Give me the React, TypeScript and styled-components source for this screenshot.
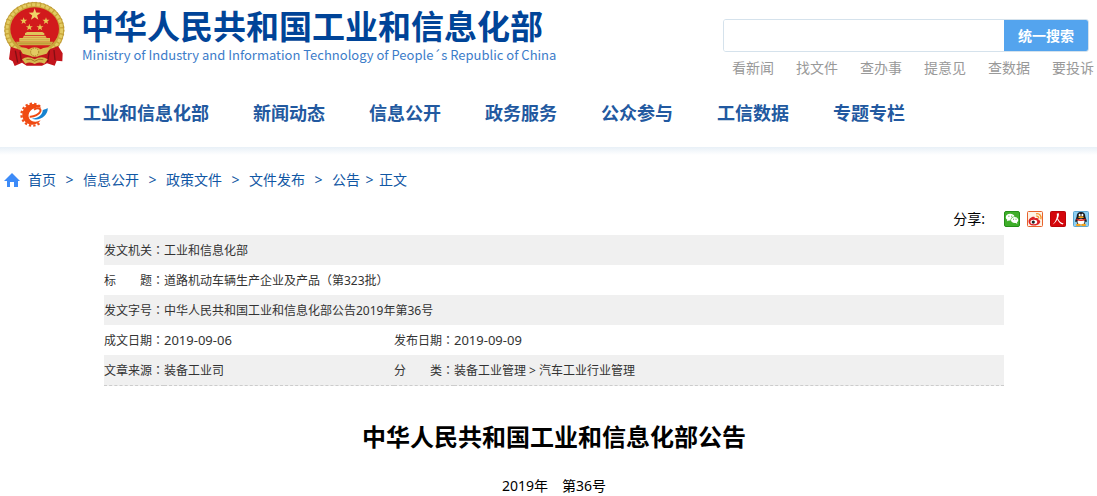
import React from "react";
import styled, { createGlobalStyle } from "styled-components";

const GlobalStyle = createGlobalStyle`
  * { box-sizing: border-box; }
  body {
    margin: 0;
    background: #fff;
    color: #000;
    font: 14px/20px "Noto Sans", "Noto Sans CJK SC", sans-serif;
  }
  a { color: inherit; text-decoration: none; }
  ul, ol { list-style: none; margin: 0; padding: 0; }
`;

const Banner = styled.header`
  display: flex;
  justify-content: space-between;
  height: 80px;
`;

const Brand = styled.a`
  display: flex;
  white-space: nowrap;
`;

const BrandText = styled.span`
  display: flex;
  flex-direction: column;
  padding: 4px 0 0 1px;
`;

const BrandName = styled.span`
  font: 700 33px/42px "Noto Sans CJK SC", sans-serif;
  color: #004498;
`;

const BrandEnglish = styled.span`
  padding-left: 1px;
  font: 400 13px/18px "Noto Sans CJK SC", sans-serif;
  color: #3c7cc9;
`;

const SearchArea = styled.div`
  width: 374px;
  padding-top: 19px;
`;

const SearchForm = styled.form`
  display: flex;
  width: 366px;
  height: 33px;
  border: 1px solid #d5e2ec;
  border-radius: 3px;
  overflow: hidden;
`;

const SearchInput = styled.input`
  flex: 1;
  min-width: 0;
  padding: 0 8px;
  border: 0;
  outline: 0;
  font-size: 14px;
`;

const SearchButton = styled.button`
  width: 84px;
  padding: 0;
  border: 0;
  background: #54a4ee;
  color: #fff;
  font: 700 14px/31px "Noto Sans CJK SC", sans-serif;
`;

const QuickLinks = styled.ul`
  display: flex;
  gap: 22px;
  padding: 6px 0 0 9px;
  color: #999;
  white-space: nowrap;
`;

const Nav = styled.nav`
  display: flex;
  align-items: center;
  height: 67px;
  padding-left: 17px;
`;

const NavList = styled.ul`
  display: flex;
  gap: 44px;
  padding: 0 0 4px 34px;
  font: 700 18px/28px "Noto Sans CJK SC", sans-serif;
  color: #2259a0;
  white-space: nowrap;
`;

const NavShadow = styled.div`
  height: 8px;
  background: linear-gradient(#e8f0f7, #fff);
`;

const Breadcrumb = styled.nav`
  display: flex;
  align-items: center;
  padding: 15px 0 0 4px;
  color: #1157a4;

  svg { margin-right: 8px; }
`;

const Separator = styled.span<{ $tight?: boolean }>`
  width: ${(p) => (p.$tight ? 19 : 27)}px;
  text-align: center;
`;

const Share = styled.div`
  display: flex;
  justify-content: flex-end;
  align-items: center;
  gap: 7px;
  height: 32px;
  margin-top: 13px;
  padding-right: 8px;
`;

const ShareLabel = styled.span`
  margin-right: 12px;
`;

const ShareLink = styled.a`
  display: flex;
`;

const Article = styled.main`
  padding-left: 11px;
`;

const InfoTable = styled.table`
  width: 100%;
  max-width: 900px;
  margin: 0 auto;
  border-collapse: collapse;
  table-layout: fixed;
  border-bottom: 1px dashed #ccc;
  font-size: 12px;
  line-height: 20px;
  color: #333;
`;

const InfoRow = styled.tr`
  height: 30px;
  &:nth-child(odd) { background: #f0f0f0; }
`;

const LabelCell = styled.th`
  padding: 5px 0 4px;
  font-weight: 400;
  text-align: left;
  vertical-align: baseline;
  white-space: nowrap;
`;

const ValueCell = styled.td`
  padding: 5px 0 4px;
  vertical-align: baseline;
`;

const LabelColumn = styled.col`
  width: 60px;
`;

const FirstValueColumn = styled.col`
  width: 230px;
`;

const Colon = styled.span`
  font-family: "Noto Sans CJK TC", sans-serif;
`;

const DateValue = styled.time`
  font-size: 13px;
`;

const Title = styled.h1`
  margin: 32px 0 0;
  font: 700 24px/36px "Noto Sans CJK SC", sans-serif;
  text-align: center;
`;

const Issue = styled.p`
  margin: 22px 0 0;
  text-align: center;
  white-space: pre;
`;

const starPoints = (cx: number, cy: number, r: number) =>
  Array.from({ length: 10 }, (_, i) => {
    const a = (Math.PI * i) / 5 - Math.PI / 2;
    const d = i % 2 ? r * 0.4 : r;
    return `${cx + d * Math.cos(a)},${cy + d * Math.sin(a)}`;
  }).join(" ");

const Emblem = () => (
  <svg width="80" height="75" viewBox="0 0 240 225" aria-hidden="true">
    <ellipse cx="103" cy="90" rx="90" ry="84" fill="#c9a63a" />
    <ellipse cx="103" cy="90" rx="82" ry="76" fill="none" stroke="#e3cb62" strokeWidth="9" strokeDasharray="10 4" />
    <ellipse cx="103" cy="90" rx="89" ry="83" fill="none" stroke="#b08a2a" strokeWidth="2" strokeDasharray="5 7" />
    <path d="M32 140 L68 152 L103 140 L138 152 L174 138 L188 160 L187 184 L170 182 L164 197 L141 190 L126 197 L80 197 L66 188 L44 198 L38 184 L27 178 Z" fill="#c3151c" />
    <path d="M46 152 L53 188 M60 155 L64 184 M148 152 L143 186 M162 150 L165 180" stroke="#840f14" strokeWidth="4" fill="none" />
    <ellipse cx="104" cy="87" rx="73" ry="65" fill="#d21a1c" />
    <polygon points={starPoints(104, 44, 19)} fill="#efd568" />
    <polygon points={starPoints(71, 63, 11)} fill="#e8c954" />
    <polygon points={starPoints(138, 63, 11)} fill="#e8c954" />
    <polygon points={starPoints(88, 82, 11)} fill="#e8c954" />
    <polygon points={starPoints(120, 82, 11)} fill="#e8c954" />
    <path d="M75 100 L81 96 H127 L133 100 V105 H75 Z M72 107 H136 L140 113 H68 Z M58 114 H150 V125 H58 Z" fill="#dfc55b" />
    <path d="M48 125 H160 L154 136 H54 Z" fill="#cbab43" />
    <path d="M60 119 H148 M54 130 H153" stroke="#a88127" strokeWidth="1" />
    <path d="M58 144 Q76 139 86 148 Q104 135 122 148 Q133 139 151 144 L140 161 L118 167 Q104 174 90 167 L68 161 Z" fill="#d9bc50" />
    <circle cx="104" cy="156" r="12" fill="#e3cb62" stroke="#a77b24" strokeWidth="3" strokeDasharray="4 3" />
    <path d="M66 178 Q82 166 104 178 Q125 166 143 178 L133 191 Q116 183 104 192 Q90 183 76 191 Z" fill="#d6b94f" />
    <path d="M79 179 Q93 174 104 184 Q116 174 130 179" fill="none" stroke="#a77b24" strokeWidth="3" />
  </svg>
);

const GearLogo = () => (
  <svg width="32" height="28" viewBox="0 0 96 84" aria-hidden="true">
    <path d="M69 20 A33 33 0 1 0 68 69" fill="none" stroke="#ef4f1a" strokeWidth="7" strokeDasharray="7 6" />
    <path d="M73 23 C61 9 36 8 23 24 C8 43 18 70 42 74 C55 76 65 69 71 61 C58 68 43 66 37 56 C28 38 47 19 73 23 Z" fill="#f04a12" />
    <path d="M36 50 C52 53 69 45 71 33 C73 22 58 19 46 29 C37 37 35 44 36 50 Z" fill="#fff" />
    <path d="M38 50 C52 51 67 42 70 34 C73 25 62 22 51 29" fill="none" stroke="#f04a12" strokeWidth="6" />
    <path d="M44 55 C60 57 78 45 77 31 C83 26 87 29 92 24 C95 46 64 67 44 55 Z" fill="#1682cf" />
  </svg>
);

const HomeIcon = () => (
  <svg width="16" height="14" viewBox="0 0 16 14" aria-hidden="true">
    <path d="M8 0 L16 8 H14 V14 H10 V9 H6 V14 H3 V8 H0 Z" fill="#3d8bf8" />
  </svg>
);

const WeChatIcon = () => (
  <svg width="16" height="16" viewBox="0 0 16 16" aria-hidden="true">
    <rect x=".5" y=".5" width="15" height="15" rx="1.5" fill="#3fae2a" stroke="#249018" />
    <path d="M6.2 2.8 C3.6 2.8 1.8 4.3 1.8 6.2 C1.8 7.3 2.4 8.2 3.3 8.8 L3 10.3 L4.8 9.4 L6.5 9.5 C6.3 7.1 8 5.4 10.6 5.4 C10 3.8 8.3 2.8 6.2 2.8 Z" fill="#fff" />
    <path d="M10.7 6 C8.5 6 7 7.4 7 9.1 C7 11 8.8 12.5 11.9 12 L13.3 12.9 L13 11.4 C15.6 9.5 14 6 10.7 6 Z" fill="#fff" />
    <path d="M4.4 5.2 h1 M7.2 5.2 h1 M9.1 8.2 h1 M11.5 8.2 h1" stroke="#3fae2a" />
  </svg>
);

const WeiboIcon = () => (
  <svg width="16" height="16" viewBox="0 0 16 16" aria-hidden="true">
    <rect x=".5" y=".5" width="15" height="15" rx="1" fill="#fdf3e6" stroke="#e8622c" />
    <path d="M1.5 10.5 C1.5 8 4.5 5.4 7 5.8 C8 6 7.8 7.2 7.8 7.2 C9.5 6.6 11.6 6.8 11.3 8.6 C12.6 9 13.4 9.8 13.2 11 C12.7 13.6 9 14.8 6.2 14.6 C3.2 14.4 1.5 12.8 1.5 10.5 Z" fill="#dc2226" />
    <ellipse cx="6.8" cy="11" rx="3.4" ry="2.2" fill="#fff" />
    <circle cx="6.3" cy="11.1" r="1.6" fill="#222" />
    <path d="M9.2 5.2 C11 4.8 12 6.2 11.6 7.6 M9 2.8 C12.5 2 14.8 5 13.8 8.2" fill="none" stroke="#f5952c" strokeWidth="1.3" />
  </svg>
);

const PeopleIcon = () => (
  <svg width="16" height="16" viewBox="0 0 16 16" aria-hidden="true">
    <rect x=".5" y=".5" width="15" height="15" rx="1" fill="#d4060b" stroke="#b90509" />
    <path d="M6.8 2.4 L8.9 2.2 C9.3 6 6.8 10.8 2.7 13.6 C5.8 10 7.6 6 6.8 2.4 Z M8 7.4 C9 10 10.8 11.9 13.6 12.4 L12.6 13.6 C10 12.8 8.3 10.8 7.4 8.6 Z" fill="#fff" />
  </svg>
);

const QQIcon = () => (
  <svg width="16" height="16" viewBox="0 0 16 16" aria-hidden="true">
    <rect x=".5" y=".5" width="15" height="15" rx="1" fill="#8fd0f2" stroke="#5ba7d5" />
    <path d="M8 1 C5 1 3.6 3 3.7 5.6 L1.9 10.7 L3.4 10.5 L4.6 13.4 H11.4 L12.6 10.5 L14.1 10.7 L12.3 5.6 C12.4 3 11 1 8 1 Z" fill="#171a20" />
    <ellipse cx="8" cy="10.8" rx="3.5" ry="3" fill="#fff" />
    <ellipse cx="6.6" cy="4" rx="1" ry="1.3" fill="#fff" />
    <ellipse cx="9.4" cy="4" rx="1" ry="1.3" fill="#fff" />
    <ellipse cx="8" cy="6.2" rx="2.9" ry=".9" fill="#f6a21c" />
    <path d="M3.5 7.4 Q8 9.4 12.5 7.4 L12.6 9 Q8 10.8 3.4 9 Z" fill="#e0241f" />
    <ellipse cx="5.4" cy="14" rx="2.5" ry="1.2" fill="#f6a21c" />
    <ellipse cx="10.6" cy="14" rx="2.5" ry="1.2" fill="#f6a21c" />
  </svg>
);

const quickLinks = ["看新闻", "找文件", "查办事", "提意见", "查数据", "要投诉"];
const navItems = ["工业和信息化部", "新闻动态", "信息公开", "政务服务", "公众参与", "工信数据", "专题专栏"];
const trail = ["首页", "信息公开", "政策文件", "文件发布", "公告"];
const shareTargets = [
  { name: "微信", Icon: WeChatIcon },
  { name: "新浪微博", Icon: WeiboIcon },
  { name: "人民网", Icon: PeopleIcon },
  { name: "QQ", Icon: QQIcon },
];

const Label = ({ children }: { children: string }) => (
  <LabelCell scope="row">
    {children}
    <Colon>：</Colon>
  </LabelCell>
);

export default function App() {
  return (
    <>
      <GlobalStyle />
      <Banner>
        <Brand href="#">
          <Emblem />
          <BrandText>
            <BrandName>中华人民共和国工业和信息化部</BrandName>
            <BrandEnglish>Ministry of Industry and Information Technology of People´s Republic of China</BrandEnglish>
          </BrandText>
        </Brand>
        <SearchArea>
          <SearchForm onSubmit={(e) => e.preventDefault()}>
            <SearchInput type="text" aria-label="搜索" />
            <SearchButton type="submit">统一搜索</SearchButton>
          </SearchForm>
          <QuickLinks>
            {quickLinks.map((t) => (
              <li key={t}><a href="#">{t}</a></li>
            ))}
          </QuickLinks>
        </SearchArea>
      </Banner>
      <Nav>
        <GearLogo />
        <NavList>
          {navItems.map((t) => (
            <li key={t}><a href="#">{t}</a></li>
          ))}
        </NavList>
      </Nav>
      <NavShadow />
      <Breadcrumb>
        <HomeIcon />
        {trail.map((t, i) => (
          <React.Fragment key={t}>
            <a href="#">{t}</a>
            <Separator $tight={i === trail.length - 1}>&gt;</Separator>
          </React.Fragment>
        ))}
        <span>正文</span>
      </Breadcrumb>
      <Share>
        <ShareLabel>分享:</ShareLabel>
        {shareTargets.map(({ name, Icon }) => (
          <ShareLink key={name} href="#" aria-label={name}><Icon /></ShareLink>
        ))}
      </Share>
      <Article>
        <InfoTable>
          <colgroup>
            <LabelColumn />
            <FirstValueColumn />
            <LabelColumn />
            <col />
          </colgroup>
          <tbody>
            <InfoRow>
              <Label>发文机关</Label>
              <ValueCell colSpan={3}>工业和信息化部</ValueCell>
            </InfoRow>
            <InfoRow>
              <Label>标　　题</Label>
              <ValueCell colSpan={3}>道路机动车辆生产企业及产品（第323批）</ValueCell>
            </InfoRow>
            <InfoRow>
              <Label>发文字号</Label>
              <ValueCell colSpan={3}>中华人民共和国工业和信息化部公告2019年第36号</ValueCell>
            </InfoRow>
            <InfoRow>
              <Label>成文日期</Label>
              <ValueCell><DateValue>2019-09-06</DateValue></ValueCell>
              <Label>发布日期</Label>
              <ValueCell><DateValue>2019-09-09</DateValue></ValueCell>
            </InfoRow>
            <InfoRow>
              <Label>文章来源</Label>
              <ValueCell>装备工业司</ValueCell>
              <Label>分　　类</Label>
              <ValueCell>装备工业管理 &gt; 汽车工业行业管理</ValueCell>
            </InfoRow>
          </tbody>
        </InfoTable>
        <Title>中华人民共和国工业和信息化部公告</Title>
        <Issue>2019年　第36号</Issue>
      </Article>
    </>
  );
}
